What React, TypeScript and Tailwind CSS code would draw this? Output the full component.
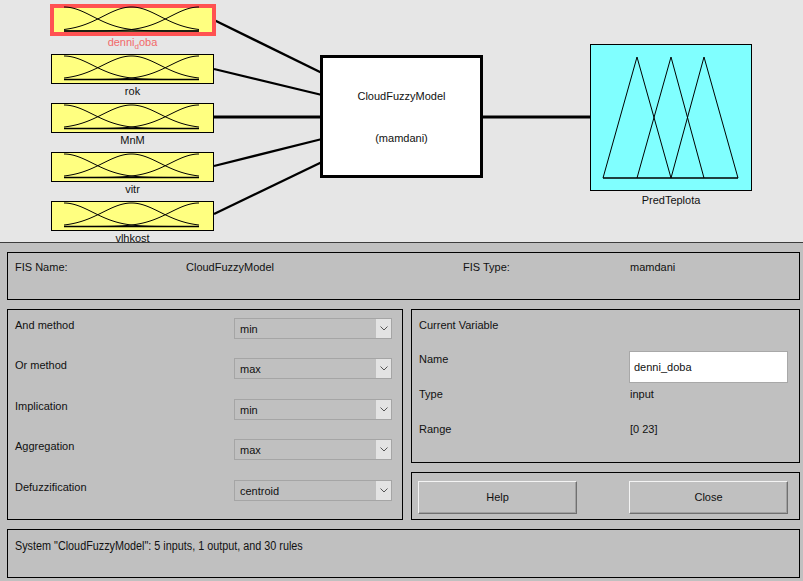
import React from "react";

const boxTops = [54, 103, 152, 201];

function gauss(c: number, top: number, base: number) {
  const s = 28.7;
  const pts: string[] = [];
  for (let x = 64; x <= 199; x += 1) {
    const y = base - (base - top) * Math.exp(-((x - c) ** 2) / (2 * s * s));
    pts.push(`${x},${y.toFixed(2)}`);
  }
  return "M" + pts.join(" L");
}

function Curves({ top, base }: { top: number; base: number }) {
  return (
    <g fill="none" stroke="#000" strokeWidth={1}>
      <path d={gauss(64, top, base)} />
      <path d={gauss(131.5, top, base)} />
      <path d={gauss(199, top, base)} />
      <line x1={64} y1={base} x2={199} y2={base} strokeWidth={1.6} />
    </g>
  );
}

function Diagram() {
  return (
    <svg width={803} height={242} className="absolute left-0 top-0">
      <g stroke="#000" strokeWidth={2.3}>
        <line x1={214} y1={20} x2={322} y2={73} />
        <line x1={214} y1={69} x2={322} y2={95} />
        <line x1={214} y1={117} x2={322} y2={117} strokeWidth={3} />
        <line x1={214} y1={166} x2={322} y2={139} />
        <line x1={214} y1={214} x2={322} y2={162} />
        <line x1={482} y1={117} x2={591} y2={117} strokeWidth={3} />
      </g>

      <rect x={52} y={6} width={162} height={28} fill="#ffff80" stroke="#ff5252" strokeWidth={4} />
      <Curves top={7} base={31} />

      {boxTops.map((t) => (
        <g key={t}>
          <rect x={51.5} y={t + 0.5} width={162} height={29} fill="#ffff80" stroke="#000" strokeWidth={1} />
          <Curves top={t + 2} base={t + 25.5} />
        </g>
      ))}

      <rect x={321.5} y={56.5} width={160} height={120} fill="#fff" stroke="#000" strokeWidth={3} />

      <rect x={590.5} y={44.5} width={161} height={146} fill="#80ffff" stroke="#000" strokeWidth={1} />
      <g fill="none" stroke="#000" strokeWidth={1}>
        <polyline points="603,178 637,57 671,178" />
        <polyline points="637,178 671,57 704,178" />
        <polyline points="671,178 704,57 738,178" />
        <line x1={603} y1={178} x2={738} y2={178} strokeWidth={1.4} />
      </g>
    </svg>
  );
}

function Chevron() {
  return (
    <svg width={8} height={5} viewBox="0 0 8 5">
      <path d="M0.5 0.5 L4 4 L7.5 0.5" fill="none" stroke="#555" strokeWidth={1} />
    </svg>
  );
}

function Select({ value }: { value: string }) {
  return (
    <div className="flex h-[21px] w-[158px] items-center border border-[#a5a5a5] bg-[#c0c0c0]">
      <span className="flex-1 pl-[5px] pt-[1px] leading-[13px]">{value}</span>
      <span className="flex h-full w-[15px] items-center justify-center bg-[#e3e3e3]">
        <Chevron />
      </span>
    </div>
  );
}

function Button({ label }: { label: string }) {
  return (
    <button className="flex h-[33px] w-[159px] items-center justify-center border border-t-[#f4f4f4] border-l-[#f4f4f4] border-r-[#707070] border-b-[#707070] bg-[#c0c0c0] shadow-[inset_-1px_-1px_0_#a0a0a0] leading-[13px]">
      {label}
    </button>
  );
}

export default function App() {
  const methods = [
    { label: "And method", value: "min", mt: "mt-0" },
    { label: "Or method", value: "max", mt: "mt-[19px]" },
    { label: "Implication", value: "min", mt: "mt-[20px]" },
    { label: "Aggregation", value: "max", mt: "mt-[19px]" },
    { label: "Defuzzification", value: "centroid", mt: "mt-[20px]" },
  ];

  return (
    <div className="h-[581px] w-[803px] overflow-hidden font-['Liberation_Sans',Arial,sans-serif] text-[11px] text-[#111]">
      {/* diagram */}
      <div className="relative h-[242px] overflow-hidden bg-[#e6e6e6]">
        <Diagram />
        <div className="absolute left-[51px] top-[36px] w-[163px] text-center leading-[13px] text-[#f26a6a]">
          denni<sub className="relative top-[3px] text-[8px]">d</sub>oba
        </div>
        <div className="absolute left-[51px] top-[85px] w-[163px] text-center leading-[13px]">rok</div>
        <div className="absolute left-[51px] top-[134px] w-[163px] text-center leading-[13px]">MnM</div>
        <div className="absolute left-[51px] top-[183px] w-[163px] text-center leading-[13px]">vitr</div>
        <div className="absolute left-[51px] top-[232px] w-[163px] text-center leading-[13px]">vlhkost</div>
        <div className="absolute left-[320px] top-[90px] w-[163px] text-center leading-[13px]">CloudFuzzyModel</div>
        <div className="absolute left-[320px] top-[132px] w-[163px] text-center leading-[13px]">(mamdani)</div>
        <div className="absolute left-[590px] top-[194px] w-[162px] text-center leading-[13px]">PredTeplota</div>
      </div>

      {/* controls */}
      <div className="flex h-[339px] flex-col border-t border-[#3c3c3c] bg-[#c0c0c0] pl-[7px] pr-[3px] pt-[9px]">
        <div className="flex h-[48px] items-start border border-black pl-[7px] pt-[8px] leading-[13px]">
          <span className="w-[171px]">FIS Name:</span>
          <span className="w-[277px]">CloudFuzzyModel</span>
          <span className="w-[167px]">FIS Type:</span>
          <span>mamdani</span>
        </div>

        <div className="mt-[9px] flex h-[211px] gap-[8px]">
          <div className="flex w-[396px] flex-col border border-black pt-[8px]">
            {methods.map((m) => (
              <div key={m.label} className={`flex h-[21px] items-start ${m.mt}`}>
                <span className="w-[226px] pl-[7px] pt-[1px] leading-[13px]">{m.label}</span>
                <Select value={m.value} />
              </div>
            ))}
          </div>

          <div className="flex flex-1 flex-col gap-[9px]">
            <div className="flex flex-1 flex-col border border-black pt-[9px] leading-[13px]">
              <div className="pl-[7px]">Current Variable</div>
              <div className="mt-[19px] flex items-start">
                <span className="w-[217px] pl-[7px] pt-[2px]">Name</span>
                <div className="flex h-[32px] w-[159px] items-center border border-[#a8a8a8] bg-white pl-[4px]">
                  denni_doba
                </div>
              </div>
              <div className="mt-[5px] flex">
                <span className="w-[217px] pl-[7px]">Type</span>
                <span className="pl-[1px]">input</span>
              </div>
              <div className="mt-[22px] flex">
                <span className="w-[217px] pl-[7px]">Range</span>
                <span className="pl-[1px]">[0 23]</span>
              </div>
            </div>
            <div className="flex h-[48px] items-start gap-[52px] border border-black pl-[6px] pt-[8px]">
              <Button label="Help" />
              <Button label="Close" />
            </div>
          </div>
        </div>

        <div className="mt-[9px] h-[49px] border border-black pl-[7px] pt-[8px]">
          <span className="inline-block origin-left scale-x-[0.865] whitespace-nowrap text-[12.5px] leading-[13px]">
            System "CloudFuzzyModel": 5 inputs, 1 output, and 30 rules
          </span>
        </div>
      </div>
    </div>
  );
}
